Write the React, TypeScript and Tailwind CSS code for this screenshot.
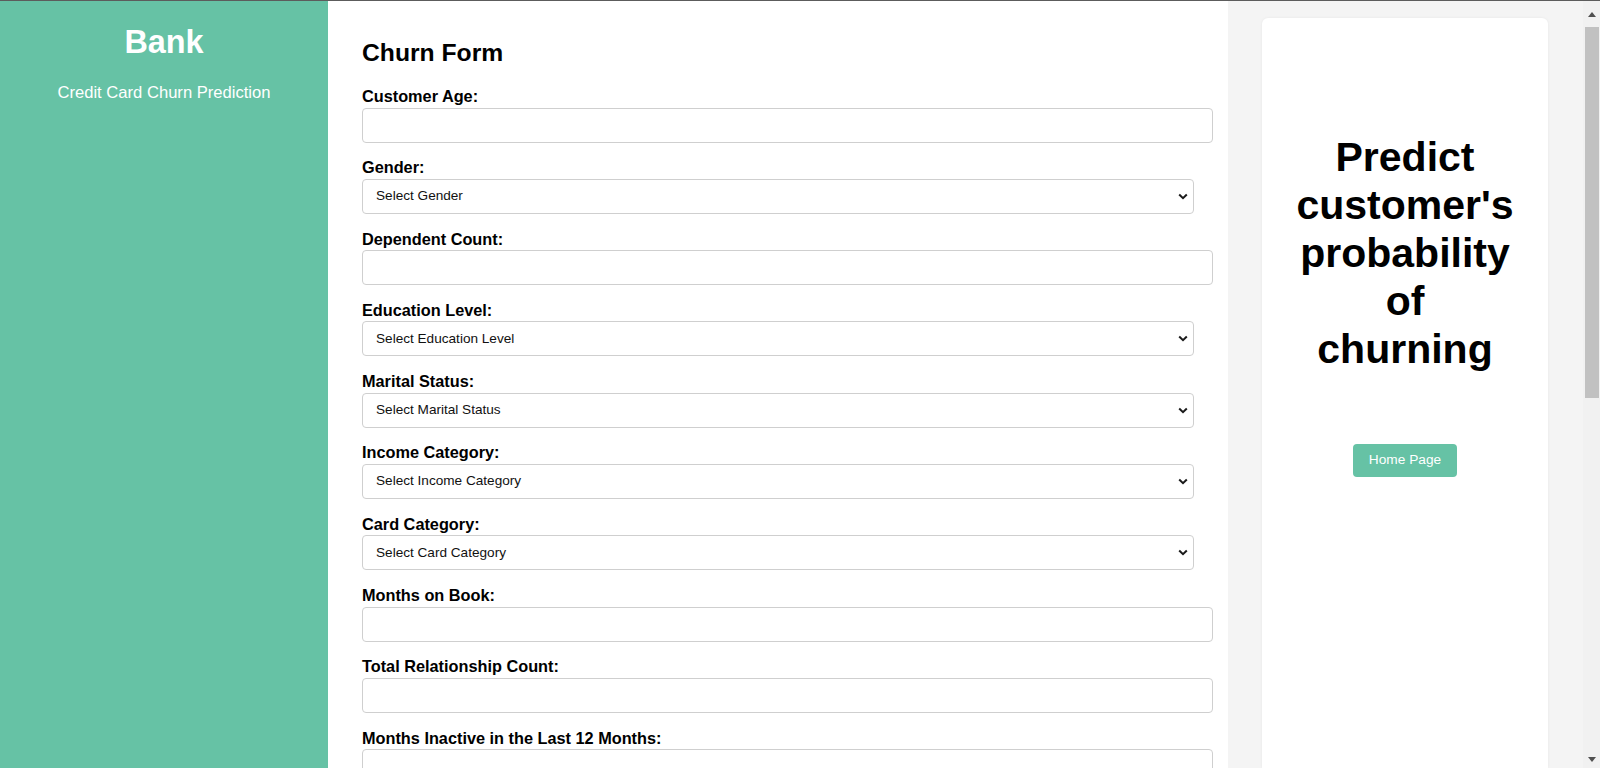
import React from 'react'

type Field = { label: string; kind: 'input' | 'select'; placeholder?: string }

const fields: Field[] = [
  { label: 'Customer Age:', kind: 'input' },
  { label: 'Gender:', kind: 'select', placeholder: 'Select Gender' },
  { label: 'Dependent Count:', kind: 'input' },
  { label: 'Education Level:', kind: 'select', placeholder: 'Select Education Level' },
  { label: 'Marital Status:', kind: 'select', placeholder: 'Select Marital Status' },
  { label: 'Income Category:', kind: 'select', placeholder: 'Select Income Category' },
  { label: 'Card Category:', kind: 'select', placeholder: 'Select Card Category' },
  { label: 'Months on Book:', kind: 'input' },
  { label: 'Total Relationship Count:', kind: 'input' },
  { label: 'Months Inactive in the Last 12 Months:', kind: 'input' },
]

function Chevron() {
  return (
    <svg width="10" height="7" viewBox="0 0 10 7" fill="none">
      <path d="M1.2 1.5L5 5.2L8.8 1.5" stroke="#1a1a1a" strokeWidth="2" />
    </svg>
  )
}

function FormField({ f }: { f: Field }) {
  return (
    <div className="mb-[15.8px]">
      <label className="block text-[16.3px] leading-[19px] font-bold text-black mb-[1.5px]">{f.label}</label>
      {f.kind === 'input' ? (
        <div className="w-[851px] h-[35px] border border-[#cfcfcf] rounded-[4px] bg-white" />
      ) : (
        <div className="w-[832px] h-[35px] border border-[#cfcfcf] rounded-[4px] bg-white flex items-center justify-between pl-[13px] pr-[5px]">
          <span className="text-[13.6px] text-[#111]">{f.placeholder}</span>
          <Chevron />
        </div>
      )}
    </div>
  )
}

export default function App() {
  return (
    <div className="h-[768px] overflow-hidden border-t border-[#5c5c5c] flex flex-col font-['Liberation_Sans',Arial,sans-serif]">
      <div className="flex flex-1 min-h-0">
        <aside className="w-[328px] shrink-0 bg-[#66c2a5] text-white text-center pt-[23px]">
          <h1 className="text-[32.4px] leading-[37px] font-bold">Bank</h1>
          <p className="mt-[22px] text-[16.6px] leading-[19px]">Credit Card Churn Prediction</p>
        </aside>

        <main className="w-[900px] shrink-0 bg-white pl-[34px] pr-[34px] pt-[38px]">
          <h2 className="text-[24.7px] leading-[28px] font-bold text-black mb-[20px]">Churn Form</h2>
          {fields.map((f, i) => (
            <FormField key={i} f={f} />
          ))}
        </main>

        <section className="flex-1 bg-[#f4f4f4] pl-[34px] pr-[35px] pt-[17px] flex flex-col">
          <div className="flex-1 bg-white rounded-t-[6px] shadow-[0_0_3px_rgba(0,0,0,0.06)] flex flex-col items-center pt-[115px]">
            <h1 className="text-[41px] leading-[48px] font-bold text-black text-center w-[221px]">
              Predict customer's probability of churning
            </h1>
            <button className="mt-[71px] h-[33px] px-[16px] rounded-[4px] bg-[#66c2a5] text-white text-[13.7px]">
              Home Page
            </button>
          </div>
        </section>

        <div className="w-[17px] shrink-0 bg-[#f1f1f1] flex flex-col items-center">
          <div className="h-[26px] flex items-center justify-center">
            <svg width="8" height="5" viewBox="0 0 8 5">
              <path d="M0 5L4 0L8 5Z" fill="#505050" />
            </svg>
          </div>
          <div className="w-[14px] h-[371px] bg-[#c1c1c1] ml-[1px]" />
          <div className="flex-1" />
          <div className="h-[17px] flex items-center justify-center">
            <svg width="8" height="5" viewBox="0 0 8 5">
              <path d="M0 0L8 0L4 5Z" fill="#505050" />
            </svg>
          </div>
        </div>
      </div>
    </div>
  )
}
